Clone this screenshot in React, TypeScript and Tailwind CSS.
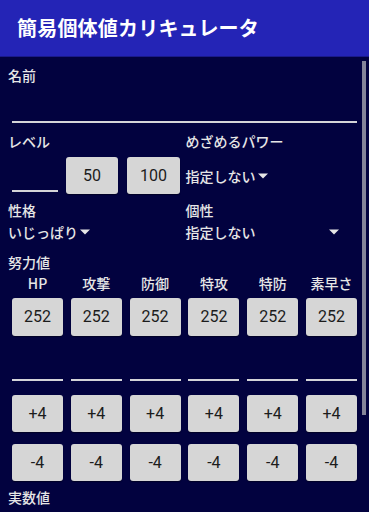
import React from "react";

const jp = { fontFamily: '"Noto Sans CJK JP", "Noto Sans", sans-serif' };
const num = { fontFamily: 'Roboto, "Noto Sans CJK JP", sans-serif' };

const stats = ["HP", "攻撃", "防御", "特攻", "特防", "素早さ"];

function Caret() {
  return (
    <svg width="10" height="6" viewBox="0 0 10 6" className="shrink-0">
      <path d="M0 0.5 L10 0.5 L5 5.5 Z" fill="#e6e6e6" />
    </svg>
  );
}

function Btn({ label, className = "" }: { label: string; className?: string }) {
  return (
    <button
      type="button"
      style={num}
      className={`flex items-center justify-center rounded-[3px] bg-[#d6d6d6] text-[16px] text-[#1c1c1c] shadow-[0_1px_1px_rgba(0,0,0,0.4)] ${className}`}
    >
      {label}
    </button>
  );
}

function Underline({ className = "" }: { className?: string }) {
  return <div className={`border-b-2 border-[#d4d4d8] ${className}`} />;
}

export default function App() {
  return (
    <div style={jp} className="relative h-[512px] w-[369px] overflow-hidden bg-[#02023f] text-[14px] leading-[20px] text-[#e6e6e6]">
      <div className="flex h-[57px] items-center border-b border-[#1a1a8a] bg-[#2424b6] pl-[17px]">
        <h1 className="text-[20px] font-bold tracking-[0.2px] text-white">簡易個体値カリキュレータ</h1>
      </div>

      <div className="pt-[8px]">
        <p className="pl-2 font-medium">名前</p>
        <Underline className="mx-3 h-[38px]" />

        <div className="mt-[8px] grid grid-cols-2">
          <p className="pl-2 font-medium">レベル</p>
          <p className="pl-[1px] font-medium">めざめるパワー</p>
        </div>
        <div className="mt-[6px] grid h-[37px] grid-cols-2">
          <div className="flex items-stretch pl-3">
            <Underline className="mb-[2px] w-[46px]" />
            <Btn label="50" className="ml-[8px] w-[52px]" />
            <Btn label="100" className="ml-[9px] w-[53px]" />
          </div>
          <div className="flex items-center gap-[2px] pl-[1px] font-medium">
            <span>指定しない</span>
            <Caret />
          </div>
        </div>

        <div className="mt-[6px] grid grid-cols-2">
          <p className="pl-2 font-medium">性格</p>
          <p className="pl-[1px] font-medium">個性</p>
        </div>
        <div className="mt-[2px] grid grid-cols-2">
          <div className="flex items-center gap-[2px] pl-2 font-medium">
            <span>いじっぱり</span>
            <Caret />
          </div>
          <div className="flex items-center justify-between pl-[1px] pr-[30px] font-medium">
            <span>指定しない</span>
            <Caret />
          </div>
        </div>

        <p className="mt-[10px] pl-2 font-medium">努力値</p>

        <div className="mx-3 mt-[1px] grid grid-cols-6 gap-x-[7.8px]">
          {stats.map((s) => (
            <p key={s} className="text-center font-medium">{s}</p>
          ))}
        </div>
        <div className="mx-3 mt-[5px] grid grid-cols-6 gap-x-[7.8px]">
          {stats.map((s) => (
            <Btn key={s} label="252" className="h-[38px]" />
          ))}
        </div>
        <div className="mx-3 mt-[8px] grid grid-cols-6 gap-x-[7.8px]">
          {stats.map((s) => (
            <Underline key={s} className="h-[37px]" />
          ))}
        </div>
        <div className="mx-3 mt-[14px] grid grid-cols-6 gap-x-[7.8px]">
          {stats.map((s) => (
            <Btn key={s} label="+4" className="h-[37px]" />
          ))}
        </div>
        <div className="mx-3 mt-[12px] grid grid-cols-6 gap-x-[7.8px]">
          {stats.map((s) => (
            <Btn key={s} label="-4" className="h-[37px]" />
          ))}
        </div>

        <p className="mt-[6px] pl-2 font-medium">実数値</p>
      </div>

      <div className="absolute left-[362px] top-[61px] h-[354px] w-[4px] bg-[#85859a]" />
    </div>
  );
}
